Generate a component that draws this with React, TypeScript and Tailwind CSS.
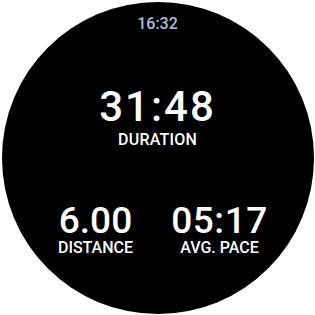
export default function App() {
  return (
    <div className="flex h-[315px] w-[315px] items-center justify-center bg-white font-['Roboto',sans-serif]">
      <div className="flex h-[312px] w-[312px] flex-col items-center rounded-full bg-black text-white">
        {/* status time */}
        <p className="mt-[14px] text-[16px] leading-none font-medium text-[#a9c1d9]">16:32</p>

        {/* duration */}
        <p className="mt-[54px] text-[42px] leading-none font-medium tracking-[2px]">31:48</p>
        <p className="mt-[5px] text-[16px] leading-[14px] font-medium tracking-[0.2px]">DURATION</p>

        {/* bottom stats */}
        <div className="mt-[55px] flex gap-[14px]">
          <div className="flex w-[110px] flex-col items-center">
            <p className="text-[37px] leading-none font-medium">6.00</p>
            <p className="mt-[2px] text-[16px] leading-[14px] font-medium">DISTANCE</p>
          </div>
          <div className="flex w-[110px] flex-col items-center">
            <p className="text-[37px] leading-none font-medium tracking-[0.5px]">05:17</p>
            <p className="mt-[2px] text-[16px] leading-[14px] font-medium">AVG. PACE</p>
          </div>
        </div>
      </div>
    </div>
  )
}
